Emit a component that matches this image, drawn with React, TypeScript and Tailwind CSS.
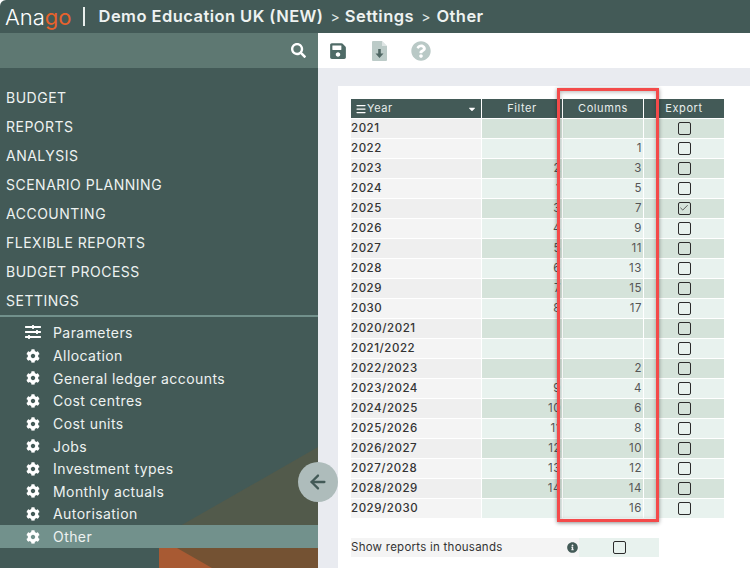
import { ArrowLeft, Check, Menu } from 'lucide-react';
import { FaCog, FaQuestionCircle, FaInfoCircle, FaCaretDown, FaSave, FaSearch, FaSlidersH } from 'react-icons/fa';

const font = { fontFamily: 'Inter' };

const topMenu = ['BUDGET', 'REPORTS', 'ANALYSIS', 'SCENARIO PLANNING', 'ACCOUNTING', 'FLEXIBLE REPORTS', 'BUDGET PROCESS', 'SETTINGS'];

const subMenu = ['Allocation', 'General ledger accounts', 'Cost centres', 'Cost units', 'Jobs', 'Investment types', 'Monthly actuals', 'Autorisation', 'Other'];

const rows = [
  { year: '2021', filter: '', columns: '' },
  { year: '2022', filter: '', columns: '1' },
  { year: '2023', filter: '2', columns: '3' },
  { year: '2024', filter: '1', columns: '5' },
  { year: '2025', filter: '3', columns: '7', checked: true },
  { year: '2026', filter: '4', columns: '9' },
  { year: '2027', filter: '5', columns: '11' },
  { year: '2028', filter: '6', columns: '13' },
  { year: '2029', filter: '7', columns: '15' },
  { year: '2030', filter: '8', columns: '17' },
  { year: '2020/2021', filter: '', columns: '' },
  { year: '2021/2022', filter: '', columns: '' },
  { year: '2022/2023', filter: '', columns: '2' },
  { year: '2023/2024', filter: '9', columns: '4' },
  { year: '2024/2025', filter: '10', columns: '6' },
  { year: '2025/2026', filter: '11', columns: '8' },
  { year: '2026/2027', filter: '12', columns: '10' },
  { year: '2027/2028', filter: '13', columns: '12' },
  { year: '2028/2029', filter: '14', columns: '14' },
  { year: '2029/2030', filter: '', columns: '16' },
];

function Box({ checked }: { checked?: boolean }) {
  return (
    <span className="flex h-[13px] w-[13px] items-center justify-center rounded-[2px] border border-[#2b2b2b] bg-transparent">
      {checked && <Check size={10} strokeWidth={1.8} className="text-[#2b2b2b]" />}
    </span>
  );
}

function Sidebar() {
  return (
    <aside className="relative flex w-[318px] shrink-0 flex-col overflow-hidden bg-[#435a57]">
      {/* background shapes */}
      <svg className="absolute bottom-0 right-0" width="159" height="121" viewBox="0 0 159 121">
        <polygon points="21,79 159,0 159,121 21,121" fill="#525a4b" />
        <polygon points="0,101 159,101 159,121 0,121" fill="#745233" />
        <polygon points="0,101 18,101 53,121 0,121" fill="#a85a33" />
      </svg>
      <div className="flex h-[35px] shrink-0 items-center justify-end bg-[#5e7872] pr-[12px]">
        <FaSearch size={15} className="text-white" />
      </div>
      <nav className="relative pt-[15px]">
        {topMenu.map((m) => (
          <div key={m} className="flex h-[29px] items-center pl-[6px] text-[14px] tracking-[0.5px] text-[#eef2f1]">
            {m}
          </div>
        ))}
        <div className="h-[2px] bg-[#72918c]" />
        <div className="pt-[4px]">
          <div className="flex h-[23.5px] items-center pb-[1px] pl-[25px] text-[14px] tracking-[0.43px] text-[#eef2f1]">
            <FaSlidersH size={16} className="text-white" />
            <span className="ml-[12px]">Parameters</span>
          </div>
          {subMenu.map((s) => (
            <div
              key={s}
              className={`flex h-[22.6px] items-center pl-[26px] text-[14px] tracking-[0.43px] text-[#eef2f1] ${s === 'Other' ? 'bg-[#72918c]' : ''}`}
            >
              <FaCog size={14} className="text-white" />
              <span className="ml-[13px]">{s}</span>
            </div>
          ))}
        </div>
      </nav>
    </aside>
  );
}

function YearTable() {
  return (
    <div className="text-[11.5px] tracking-[0.55px] text-[#333]">
      <div className="flex h-[20px] gap-px border-b border-white text-[11px] tracking-[0.6px] text-[#e8eeec]">
        <div className="flex w-[130px] items-center bg-[#435a57] pl-[4px] pr-[4px]">
          <Menu size={12} strokeWidth={2.5} className="text-white" />
          <span className="flex-1">Year</span>
          <FaCaretDown size={10} className="text-white" />
        </div>
        <div className="flex w-[80px] items-center justify-center bg-[#435a57]">Filter</div>
        <div className="flex w-[80px] items-center justify-center bg-[#435a57]">Columns</div>
        <div className="flex w-[80px] items-center justify-center bg-[#435a57]">Export</div>
      </div>
      {rows.map((r, i) => {
        const cell = i % 2 === 0 ? 'bg-[#d5e3da]' : 'bg-[#e8f2ee]';
        return (
          <div key={r.year} className="flex h-[20px] gap-px border-b border-white">
            <div className={`flex w-[130px] items-center font-medium ${i % 2 === 0 ? 'bg-[#efefef]' : 'bg-[#f4f4f4]'}`}>{r.year}</div>
            <div className={`flex w-[80px] items-center justify-end pr-[1px] text-[#555] ${cell}`}>{r.filter}</div>
            <div className={`flex w-[80px] items-center justify-end pr-[1px] text-[#555] ${cell}`}>{r.columns}</div>
            <div className={`flex w-[80px] items-center justify-center pb-[1px] ${cell}`}>
              <Box checked={r.checked} />
            </div>
          </div>
        );
      })}
    </div>
  );
}

export default function App() {
  return (
    <div className="flex h-[568px] w-[750px] flex-col overflow-hidden" style={font}>
      <header className="flex h-[33px] shrink-0 items-center rounded-tl-[6px] bg-[#435a57] pl-[5px] text-white">
        <span className="text-[22px] font-light leading-none">
          Ana<span className="font-normal text-[#e8622c]">go</span>
        </span>
        <span className="ml-[11px] h-[19px] w-[2px] bg-[#e8eeec]" />
        <span className="ml-[14px] text-[16.5px] font-semibold tracking-[0.45px] text-[#eef2f1]">Demo Education UK (NEW)</span>
        <span className="ml-[7px] mr-[5px] text-[14px] text-[#dfe6e4]">&gt;</span>
        <span className="text-[16.5px] font-semibold tracking-[0.5px] text-[#eef2f1]">Settings</span>
        <span className="ml-[7px] mr-[6px] text-[14px] text-[#dfe6e4]">&gt;</span>
        <span className="text-[16.5px] font-semibold tracking-[0.45px] text-[#eef2f1]">Other</span>
      </header>
      <div className="flex min-h-0 flex-1">
        <Sidebar />
        <main className="flex min-w-0 flex-1 flex-col bg-[#e9ebf0]">
          <div className="flex h-[35px] shrink-0 items-center bg-white pl-[11px]">
            <FaSave size={18} className="text-[#4f6b67]" />
            <svg className="ml-[25px]" width="15" height="20" viewBox="0 0 15 20">
              <path d="M1 0h9l5 5v14a1 1 0 0 1-1 1H1a1 1 0 0 1-1-1V1a1 1 0 0 1 1-1z" fill="#bccbc8" />
              <path d="M10 0l5 5h-5z" fill="#ffffff" opacity="0.5" />
              <path d="M6.200 8h2.600v4.500h2.700l-4 4.500-4-4.500h2.700z" fill="#4f6663" />
            </svg>
            <FaQuestionCircle size={20} className="ml-[24px] text-[#b9c9c6]" />
          </div>
          <div className="min-h-0 flex-1 pl-[20px] pt-[18px]">
            <div className="h-full bg-white pl-[13px] pt-[13px]">
              <YearTable />
              <div className="mt-[19px] flex h-[19px] text-[11.5px] tracking-[0.25px] text-[#333]">
                <div className="flex w-[228px] items-center justify-between bg-[#f4f4f4] pr-[1px]">
                  <span>Show reports in thousands</span>
                  <FaInfoCircle size={11} className="text-[#435a57]" />
                </div>
                <div className="flex w-[80px] items-center justify-center bg-[#e8f2ee]">
                  <Box />
                </div>
              </div>
            </div>
          </div>
        </main>
      </div>
      {/* collapse button over the sidebar edge */}
      <button className="absolute left-[298px] top-[462px] flex h-[40px] w-[40px] items-center justify-center rounded-full bg-[#aebcbb]">
        <ArrowLeft size={22} strokeWidth={2.5} className="text-[#435a57]" />
      </button>
      {/* red annotation over the table */}
      <div className="pointer-events-none absolute left-[557px] top-[88px] h-[434px] w-[102px] border-[3px] border-[#f44a4a] shadow-[0_1px_4px_rgba(0,0,0,0.45),inset_0_1px_4px_rgba(0,0,0,0.3)]" />
    </div>
  );
}
